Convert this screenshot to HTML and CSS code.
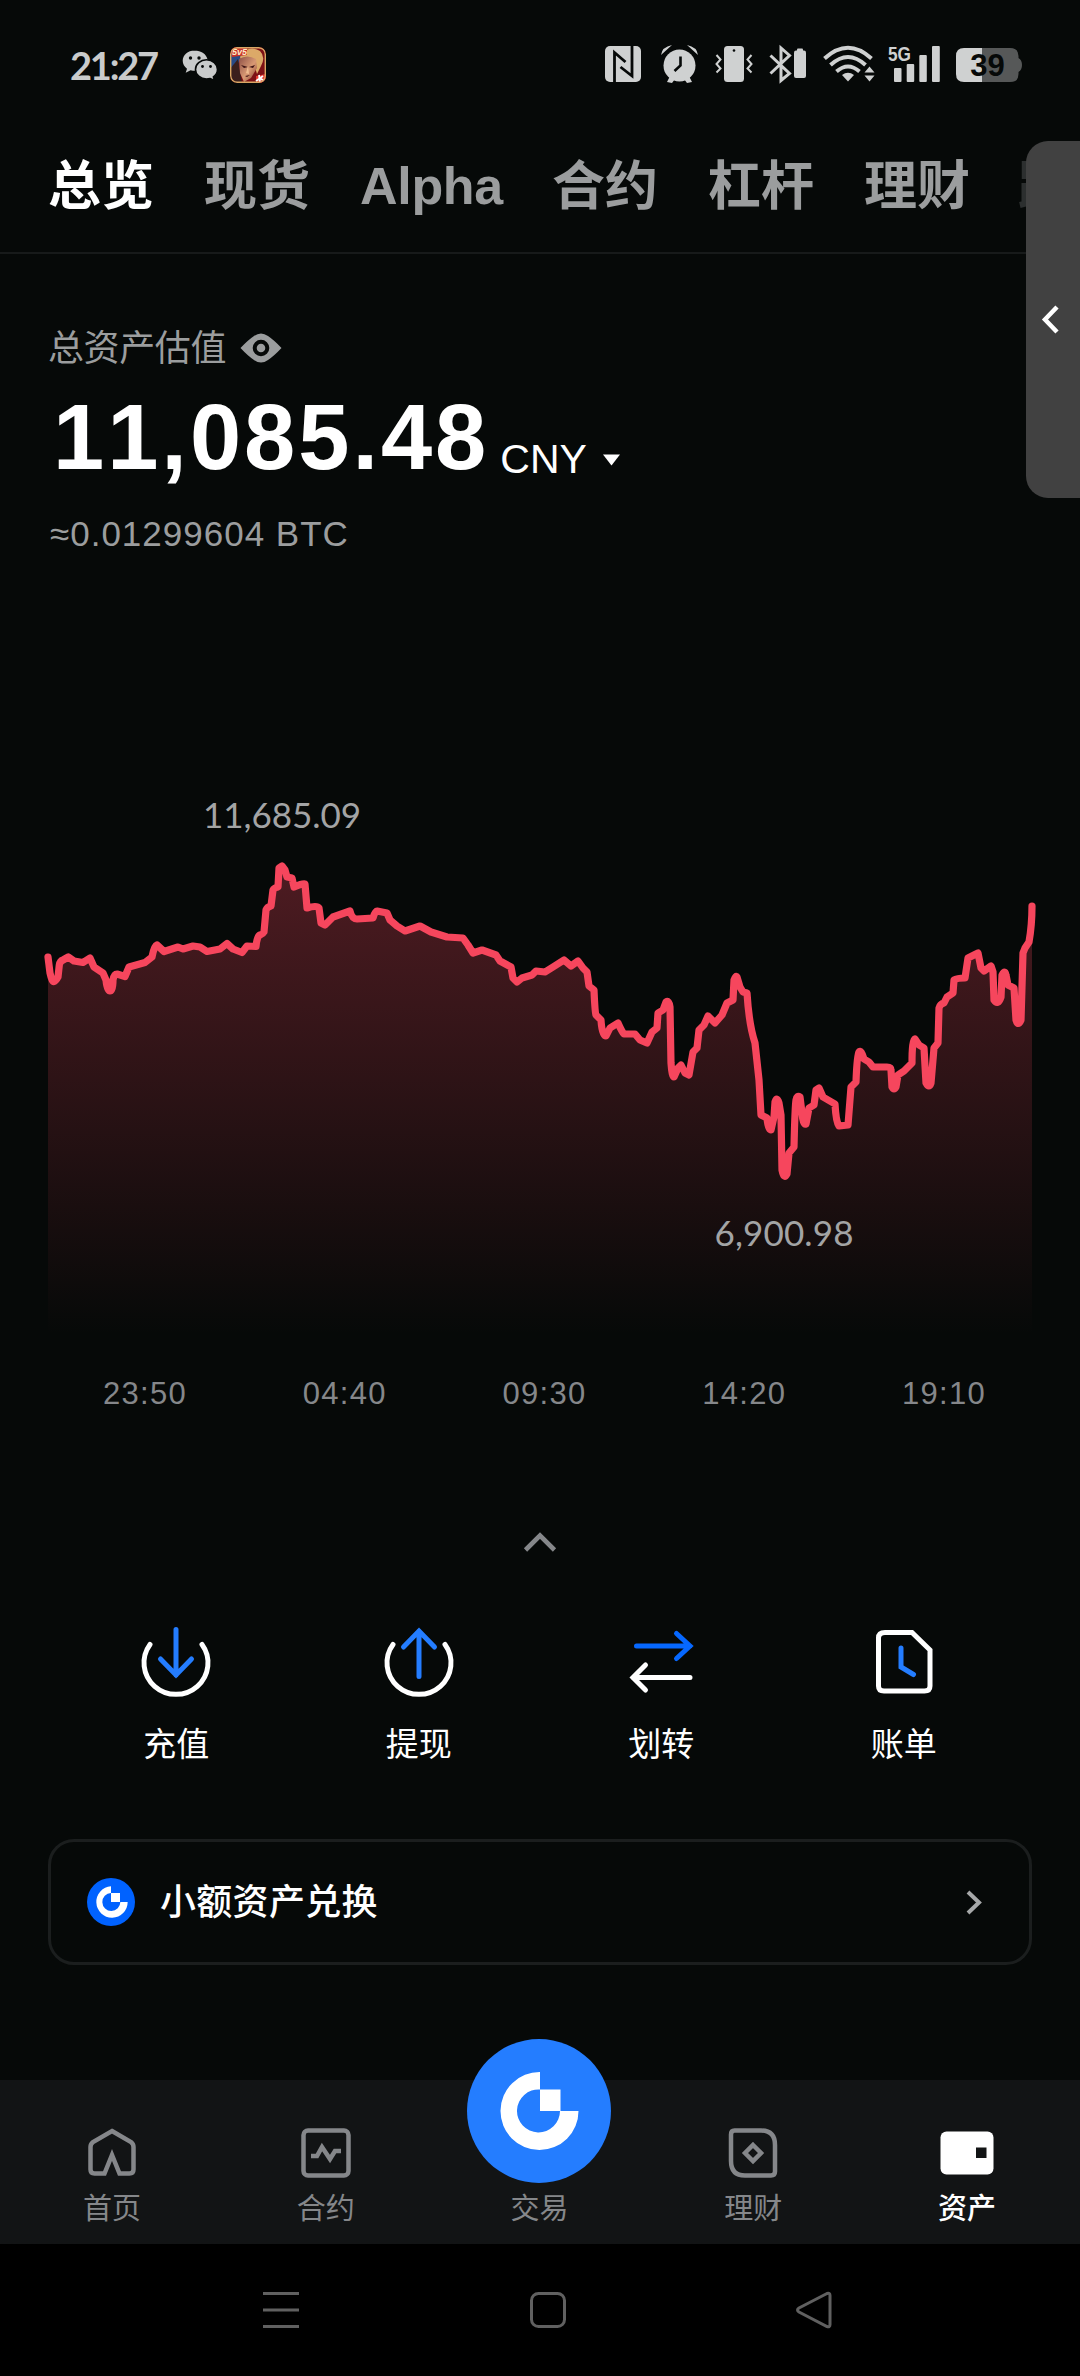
FILE: index.html
```html
<!DOCTYPE html>
<html lang="zh-CN">
<head>
<meta charset="utf-8">
<title>资产总览</title>
<link rel="stylesheet" href="styles.css">
</head>
<body>
<div class="app">
  <header class="status">
    <div class="status-left">
      <span class="time">21:27</span>
      <svg class="wechat" width="36" height="30" viewBox="182 50 36 30">
        <path fill="#c9cbcb" d="M194.500 50.500c-6.600 0-11.800 4.600-11.800 10.300 0 3.200 1.700 6 4.300 7.900l-1.300 4 4.900-2.500c4 1 8 .8 11-1.500l6-9c-1-5.500-6.500-9.200-13.100-9.200z"/>
        <path fill="#c9cbcb" stroke="#060908" stroke-width="1.600" d="M206.500 59.800c-6.100 0-11 4.300-11 9.600 0 5.400 4.900 9.600 11 9.600 1.300 0 2.500-.2 3.700-.5l4.300 2-1.100-3.700c2.500-1.800 4.100-4.400 4.100-7.400 0-5.300-4.900-9.600-11-9.600z"/>
        <g fill="#060908"><circle cx="190.500" cy="58" r="1.700"/><circle cx="199" cy="58" r="1.700"/><circle cx="202.500" cy="66.500" r="1.400"/><circle cx="210.500" cy="66.500" r="1.400"/></g>
      </svg>
      <svg class="game" width="36" height="36" viewBox="0 0 36 36">
        <defs>
          <clipPath id="tile"><rect width="36" height="36" rx="7"/></clipPath>
          <linearGradient id="face" x1="0" x2="1" y1="0" y2="1"><stop offset="0" stop-color="#8d4f47"/><stop offset=".55" stop-color="#d99a74"/><stop offset="1" stop-color="#7c3226"/></linearGradient>
        </defs>
        <g clip-path="url(#tile)">
          <rect width="36" height="36" fill="#7d1015"/>
          <path fill="#284a86" d="M0 7h12L6 22H0z"/>
          <path fill="#3a1f1c" d="M0 22L8 12l4 24H0z"/>
          <path fill="#dca968" d="M10 10Q18-3 30 4q6 6 1 15l-4 8-4-13-11 3z"/>
          <path fill="url(#face)" d="M9 12q8-5 17 0l1 9-6 10-7 4-4-9z"/>
          <path d="M11 18l7 2-4 1zM19 20l6-2-2 3zM15 29l5-1-3 2z" fill="#3f1515"/>
          <path d="M18 19l-2 7 3 1z" fill="#f0bd91"/>
          <path fill="#c9332a" d="M0 0h17v8l-15 2z"/>
          <text x="2" y="8" class="game-label">5v5</text>
          <path fill="#e53a33" d="M26 29l10-2v10H26z"/>
          <path d="M26 34l7-5M29 28l1 7M30 31l4 3" stroke="#fff" stroke-width="1.800"/>
          <rect x=".7" y=".7" width="34.600" height="34.600" rx="6.500" fill="none" stroke="#d9a765" stroke-width="1.400"/>
        </g>
      </svg>
    </div>
    <svg class="status-right" width="420" height="42" viewBox="604 43 420 42">
      <g fill="#cfd1d1">
        <rect x="605" y="46" width="36" height="36" rx="5"/>
        <path fill="none" stroke="#060908" stroke-width="2.800" d="M614.500 82V52.500L625.500 62M632 46v30L620.500 67"/>
        <circle cx="679.500" cy="65.500" r="16"/>
        <path d="M661 55q1-8 11-10zM698 55q-1-8-11-10zM667 82l3-6 5 3-3 4zM692 82l-3-6-5 3 3 4z"/>
        <path fill="none" stroke="#060908" stroke-width="2.600" d="M680.500 56.500v9l-6 5.500"/>
        <rect x="724" y="46" width="20" height="36" rx="3.500"/>
        <circle cx="734" cy="50.500" r="1.300" fill="#060908"/>
        <path fill="none" stroke="#cfd1d1" stroke-width="2" d="M716.500 55l4 4.500-4 4.500 4 4.500-4 4M751.500 55l-4 4.500 4 4.500-4 4.500 4 4"/>
        <path fill="none" stroke="#cfd1d1" stroke-width="3" d="M770.500 55.500l19 18-8.500 7V48l8.500 7.500-19 18"/>
        <rect x="794" y="50.500" width="12" height="27.500" rx="2"/><rect x="797" y="48.500" width="6" height="4" rx="1"/>
        <path fill="none" stroke="#cfd1d1" stroke-width="4" d="M824.500 58.500q23.500-21.500 47 0M830.500 65q17.500-16 35 0M836.500 71.500q11.500-10 23 0"/>
        <path d="M842 75q6-4.500 12 0l-6 6.500z"/>
        <path d="M864.500 72.500l5-6 5 6zM864.500 75.500l5 6 5-6z"/>
        <rect x="894" y="68" width="7.500" height="14" rx="1"/><rect x="906.700" y="64" width="7.500" height="18" rx="1"/><rect x="919.300" y="55" width="7.500" height="27" rx="1"/><rect x="932" y="46" width="7.800" height="36" rx="1"/>
        <text x="888" y="60.500" textLength="23" lengthAdjust="spacingAndGlyphs" class="net">5G</text>
        <path fill="#565858" d="M982 48h28q8.500 0 8.500 8v2q3.500 2 3.500 7t-3.500 7v2q0 8-8.500 8h-28z"/>
        <path d="M964 48h18v34h-18q-8 0-8-8V56q0-8 8-8z"/>
        <text x="987.500" y="76" text-anchor="middle" class="batt">39</text>
      </g>
    </svg>
  </header>

  <nav class="tabs">
    <span class="tab on">总览</span><span class="tab">现货</span><span class="tab latin">Alpha</span><span class="tab">合约</span><span class="tab">杠杆</span><span class="tab">理财</span><span class="tab faded">跟单</span>
  </nav>
  <aside class="drawer">
    <svg width="20" height="32" viewBox="0 0 20 32"><path d="M17 3L5 15.500l12 12.500" fill="none" stroke="#fff" stroke-width="4.500"/></svg>
  </aside>

  <section class="summary">
    <div class="caption"><span>总资产估值</span>
      <svg width="42" height="30" viewBox="0 0 42 30"><path fill="#9b9d9e" d="M.5 15Q8 7 14 3q7-5 14 0 6 4 13.500 12Q34 23 28 27q-7 5-14 0Q8 23 .5 15z"/><circle cx="21" cy="15" r="6.300" fill="#9b9d9e" stroke="#060908" stroke-width="4"/></svg>
    </div>
    <div class="total"><span class="amount">11,085.48</span>
      <span class="currency"><span>CNY</span><svg width="19" height="12" viewBox="0 0 19 12"><path d="M1 .5h17L9.500 11.500z" fill="#fff"/></svg></span>
    </div>
    <div class="btc">≈0.01299604 BTC</div>
  </section>

  <section class="chart">
    <svg width="1080" height="570" viewBox="0 780 1080 570">
      <defs><linearGradient id="fade" gradientUnits="userSpaceOnUse" x1="0" y1="866" x2="0" y2="1335"><stop offset="0" stop-color="#f6465d" stop-opacity=".3"/><stop offset="1" stop-color="#f6465d" stop-opacity="0"/></linearGradient></defs>
      <path fill="url(#fade)" d="M48 1340V957L50 973 54 981 58 977 59 965 63 960 68 957 74 961 83 962 90 958 94 967 103 973 106 980 110 991 113 980 117 974 125 976 129 967 145 962 152 957 157 945 164 951 178 947 193 946 207 951 220 949 227 943 233 949 242 952 247 946 256 946 260 935 264 932 266 910 271 906 273 890 278 887 279 868 282 866 285 870 287 877 292 878 294 887 305 884 307 908 319 908 321 923 325 925 333 917 350 911 357 919 373 918 377 911 387 913 390 920 405 931 420 926 431 932 447 937 463 938 473 953 482 950 496 955 511 967 513 978 517 982 532 975 536 971 545 972 564 960 571 966 578 961 587 972 589 986 594 990 596 1015 601 1020 603 1033 606 1036 610 1028 618 1023 624 1034 635 1034 647 1043 652 1032 657 1028 658 1013 663 1010 666 1002 670 1007 671 1063 674 1077 681 1065 689 1075 693 1052 697 1048 699 1030 704 1025 708 1016 715 1023 722 1015 727 1003 733 1000 734 980 737 977 740 987 747 993 748 1020 755 1043 759 1080 761 1115 767 1118 768 1128 771 1130 775 1102 777 1099 781 1110 782 1170 785 1178 789 1153 794 1147 796 1100 799 1097 805 1125 809 1108 814 1105 816 1090 819 1088 823 1097 835 1104 837 1125 848 1125 851 1087 856 1082 857 1057 861 1051 864 1059 873 1067 891 1068 892 1087 894 1090 898 1075 912 1063 913 1043 915 1039 924 1048 926 1083 929 1087 934 1048 938 1043 939 1008 947 1002 953 993 954 980 965 978 968 958 978 953 981 968 991 966 994 1000 998 1003 1002 975 1005 972 1008 985 1014 988 1016 1020 1018 1025 1021 1020 1023 953 1029 942 1032 904V1340z"/>
      <path class="line" d="M48 957L50 973Q52 982 54 981.500T58 977L59.300 965Q60 961 63 960L68.300 957 74 961 83 962.500 90 958 94 967 103 973 106 980Q107 991 110 991T113 980Q114 974 117 974L125 976.500 129 967 145 962.500 152 957 Q154 946 157 945L164 951.500 178 947 183 949 193 946 200 947 207 951.500 220 949 227 943.500 233 949 242 952.500 247 946 256 946.500Q257 936 260 935T264 932L266 910Q267 907 271 906L273 890Q274 888 278 887L279 868 282 866 285 870 287 877 292 878 294 887Q303 883 305 884L307 908Q317 905 319 908L321 923 325 925 333 917 350 911Q352 919 357 919L373 918Q375 911 377 911L387 913 390 920 397 926 405 931 420 926 431 932 447 937 463 938 468 945 473 953 482 950 496 955 500 961 511 967 513 978 517 982 522 978 532 975 536 971 545 972 553 967 564 960 571 966 578 961 583 968 587 972 589 986 594 990Q595 1013 596 1015L601 1020Q602 1036 606 1036L610 1028 618 1023Q622 1032 624 1034L635 1034 640 1040 647 1043 652 1032 657 1028 658 1013 663 1010 666 1002Q669 1000 670 1007L671 1063Q672 1077 674 1077L678 1068 681 1065 685 1073 689 1075 693 1052 697 1048 699 1030 704 1025 708 1016 715 1023 722 1015 727 1003 733 1000 734 980Q736 975 737 977L740 987 743 992 747 993Q749 1025 755 1043L759 1080 761 1115 767 1118Q768 1130 771 1130L774 1117 775 1102Q777 1096 779 1103L781 1115 782 1170Q784 1180 787 1174L789 1153 794 1147Q795 1105 796 1100T800 1097L802 1113Q803 1125 806 1124L809 1108 814 1105 816 1090 819 1088 823 1097 835 1104Q836 1122 839 1126L848 1125 851 1087 856 1082Q857 1055 859 1052T864 1059L869 1062 873 1067 887 1067Q891 1067 891 1070L892 1087Q894 1091 896 1087L898 1075 904 1071 912 1063Q912 1040 915 1039L919 1045 924 1048 926 1083Q929 1089 931 1083L934 1048 938 1043 939 1008Q940 1004 944 1003L947 997 953 993 954 980Q957 978 965 978L968 958 978 953 981 968 984 971 991 966 993 972 994 1000Q998 1006 1001 997L1002 975Q1005 969 1006 975L1008 985 1014 988 1016 1020Q1018 1027 1021 1020L1023 953 1025 948 1029 942Q1032 925 1032 906"/>
      <text x="282" y="827.500" text-anchor="middle" class="mark" textLength="158">11,685.09</text>
      <text x="784" y="1246" text-anchor="middle" class="mark" textLength="139">6,900.98</text>
    </svg>
    <div class="axis"><span>23:50</span><span>04:40</span><span>09:30</span><span>14:20</span><span>19:10</span></div>
  </section>

  <div class="fold"><svg width="36" height="24" viewBox="0 0 36 24"><path d="M3.500 20L18 5.500 32.500 20" fill="none" stroke="#85878a" stroke-width="4.600"/></svg></div>

  <section class="actions">
    <div class="action">
      <svg width="76" height="76" viewBox="-38 -38 76 76"><path class="w" d="M-26-17.500A32 31.500 0 1 0 26-17.500"/><path class="b" d="M0-32.500V13M-15.500-3L0 13 15.500-3"/></svg><span>充值</span></div>
    <div class="action">
      <svg width="76" height="76" viewBox="-38 -38 76 76"><path class="w" d="M-26-17.500A32 31.500 0 1 0 26-17.500"/><path class="b" d="M0 14.500V-31M-15.500-15L0-31 15.500-15"/></svg><span>提现</span></div>
    <div class="action">
      <svg width="76" height="76" viewBox="-38 -38 76 76"><path class="b deep" d="M-24.500-16H29M15.500-28.500L29-16 15.500-3.500"/><path class="w" d="M29 15.500H-28M-15.500 3L-28 15.500-15.500 28"/></svg><span>划转</span></div>
    <div class="action">
      <svg width="76" height="76" viewBox="-38 -38 76 76"><path class="w" d="M-19-29.500H8L26-12V24q0 5-5.500 5H-20q-5.500 0-5.500-5V-24q0-5.500 6.500-5.500z"/><path class="b" d="M-3-14V5L9.500 12.500"/></svg><span>账单</span></div>
  </section>

  <section class="card">
    <svg width="48" height="48" viewBox="-72 -72 144 144"><circle r="72" fill="#0062ff"/><path fill="#fff" d="M0-47A47 47 0 1 0 50 0H28A27 27 0 1 1 0-27zM0-27H27V0H0z"/></svg>
    <span class="card-text">小额资产兑换</span>
    <svg class="go" width="18" height="28" viewBox="0 0 18 28"><path d="M3 4l11 10.500L3 25" fill="none" stroke="#a6a8a9" stroke-width="4"/></svg>
  </section>

  <nav class="bottom">
    <div class="item"><svg width="54" height="54" viewBox="-27 -27 54 54"><path d="M0-22L19-11Q21.500-9 21.500-6V16.500Q21.500 20.500 17.500 20.500H7.500L0 2-7.500 20.500H-17.500Q-21.500 20.500-21.500 16.500V-6Q-21.500-9-19-11z"/></svg><span>首页</span></div>
    <div class="item"><svg width="54" height="54" viewBox="-27 -27 54 54"><rect x="-22.500" y="-22.500" width="45" height="45" rx="4.500"/><path d="M-15 3H-9L-4-6 4 6 9-2H15" stroke-width="4.500"/></svg><span>合约</span></div>
    <div class="item"><div class="trade"><svg width="144" height="144" viewBox="-72 -72 144 144"><path fill="#fff" stroke="none" d="M1-39A39 39 0 1 0 39.500 0H21A21.500 21.500 0 1 1 1-21.500zM1-21.500H21.500V0H1z"/></svg></div><span>交易</span></div>
    <div class="item"><svg width="54" height="54" viewBox="-27 -27 54 54"><path d="M-18.500-22.500H8Q22-22.500 22-8V18.500Q22 22.500 18 22.500H-8Q-22 22.500-22 8V-18.500Q-22-22.500-18.500-22.500zM0-8L8 0 0 8-8 0z"/></svg><span>理财</span></div>
    <div class="item on"><svg width="54" height="54" viewBox="-27 -27 54 54"><rect x="-26.500" y="-21.500" width="53" height="43" rx="6" fill="#fff" stroke="none"/><rect x="9" y="-5.500" width="10.500" height="10.500" fill="#121415" stroke="none"/></svg><span>资产</span></div>
  </nav>

  <footer class="keys">
    <svg width="36" height="40" viewBox="0 0 36 40"><path d="M0 3.500h36M0 20h36M0 36.500h36"/></svg>
    <svg width="36" height="40" viewBox="0 0 36 40"><rect x="1.500" y="3.500" width="33" height="33" rx="7"/></svg>
    <svg width="36" height="40" viewBox="0 0 36 40"><path d="M31 3.500L3 18Q0 20 3 22L31 36.500Q34 37.500 34 34.500V5.500Q34 2.500 31 3.500z"/></svg>
  </footer>
</div>
</body>
</html>
```
FILE: styles.css
```css
* { box-sizing: border-box; }
body { margin: 0; background: #060908; }
svg { display: block; flex: none; }
.app {
  position: relative;
  width: 1080px;
  height: 2376px;
  overflow: hidden;
  display: flex;
  flex-direction: column;
  background: #060908;
  color: #fff;
  font-family: "Liberation Sans", "Noto Sans CJK SC", sans-serif;
}
.app > * { flex: none; }

.status { height: 130px; padding: 0 56px 0 70px; display: flex; justify-content: space-between; align-items: flex-start; }
.status-left { display: flex; align-items: center; height: 130px; }
.time { width: 112px; font: 700 38px/126px Lato, sans-serif; color: #c9cbcb; letter-spacing: -2.200px; }
.game { margin-left: 12px; }
.status-right { margin-top: 43px; }
.game-label { font: italic 700 9px "Liberation Sans", sans-serif; fill: #ffe9c9; }
.net { font: 700 21px "Liberation Sans", sans-serif; fill: #cfd1d1; }
.batt { font: 600 31px "Liberation Sans", sans-serif; fill: #060908; }

.tabs { height: 124px; border-bottom: 2px solid #171a1a; padding-left: 48px; display: flex; gap: 50px; font-weight: 700; font-size: 53px; line-height: 113px; color: #9b9d9e; white-space: nowrap; overflow: hidden; }
.tab { flex: none; }
.tab.on { color: #fff; }
.tab.latin { width: 142px; font-size: 52px; letter-spacing: -.3px; }
.tab.faded { color: #2c2f2f; margin-left: -2px; }

.drawer { position: absolute; right: 0; top: 141px; width: 54px; height: 357px; border-radius: 22px 0 0 22px; background: #414141; display: flex; align-items: center; padding-left: 14px; }

.summary { height: 526px; padding: 0 48px; }
.caption { padding-top: 69px; display: flex; align-items: center; gap: 14px; font-size: 36px; line-height: 50px; letter-spacing: -.4px; color: #9b9d9e; }
.caption span { padding-top: 1px; }
.caption svg { margin-bottom: 1px; }
.total { display: flex; align-items: flex-start; height: 111px; padding-top: 7px; }
.amount { font-weight: 700; font-size: 92px; line-height: 112px; letter-spacing: 3px; padding-left: 5px; font-kerning: none; }
.currency { display: flex; align-items: center; font-size: 41px; line-height: 46px; margin: 55px 0 0 11px; }
.currency svg { margin: 1px 0 0 15px; }
.btc { font-size: 35px; line-height: 50px; letter-spacing: 1px; color: #9b9d9e; padding-left: 2px; margin-top: 24px; }

.chart { height: 662px; }
.line { fill: none; stroke: #f6465d; stroke-width: 7.200px; stroke-linejoin: round; stroke-linecap: round; }
.mark { font: 400 35px Lato, sans-serif; fill: #a3a4a5; }
.axis { display: flex; justify-content: space-between; margin: 23px 87px 0 96px; color: #85878a; font-size: 31px; line-height: 42px; letter-spacing: 1.300px; }
.axis span { width: 98px; text-align: center; }

.fold { height: 182px; padding-top: 88px; display: flex; justify-content: center; }

.actions { height: 215px; padding: 0 55px; display: grid; grid-template-columns: repeat(4, 242.500px); font-size: 33px; line-height: 48px; }
.action { display: flex; flex-direction: column; align-items: center; gap: 21px; }
.action svg { fill: none; stroke-width: 5px; stroke-linecap: round; }
.w { stroke: #fff; }
.b { stroke: #247dff; }
.b.deep { stroke: #0668ff; }

.card { height: 126px; margin: 0 48px; padding: 0 46px 0 36px; border: 3px solid #1b1e1e; border-radius: 26px; display: flex; align-items: center; }
.card-text { font-size: 36px; font-weight: 500; line-height: 50px; margin-left: 25px; padding-top: 1px; letter-spacing: .3px; }
.go { margin-left: auto; }

.bottom { margin-top: 115px; height: 164px; background: #121415; padding: 46px 6px 0 5px; display: grid; grid-template-columns: repeat(5, 213.800px); color: #85878a; font-size: 29px; line-height: 42px; }
.item { display: flex; flex-direction: column; align-items: center; justify-content: flex-start; gap: 8px; height: 104px; }
.item svg { fill: none; stroke: #85878a; stroke-width: 4.500px; }
.item.on { color: #fff; font-weight: 500; }
.trade { height: 54px; display: flex; flex-direction: column; justify-content: flex-end; }
.trade svg { background: #247dff; border-radius: 50%; margin-bottom: -3px; }

.keys { height: 132px; background: #000; padding: 46px 248px 0 263px; display: flex; justify-content: space-between; }
.keys svg { fill: none; stroke: #606060; stroke-width: 3px; }
```
